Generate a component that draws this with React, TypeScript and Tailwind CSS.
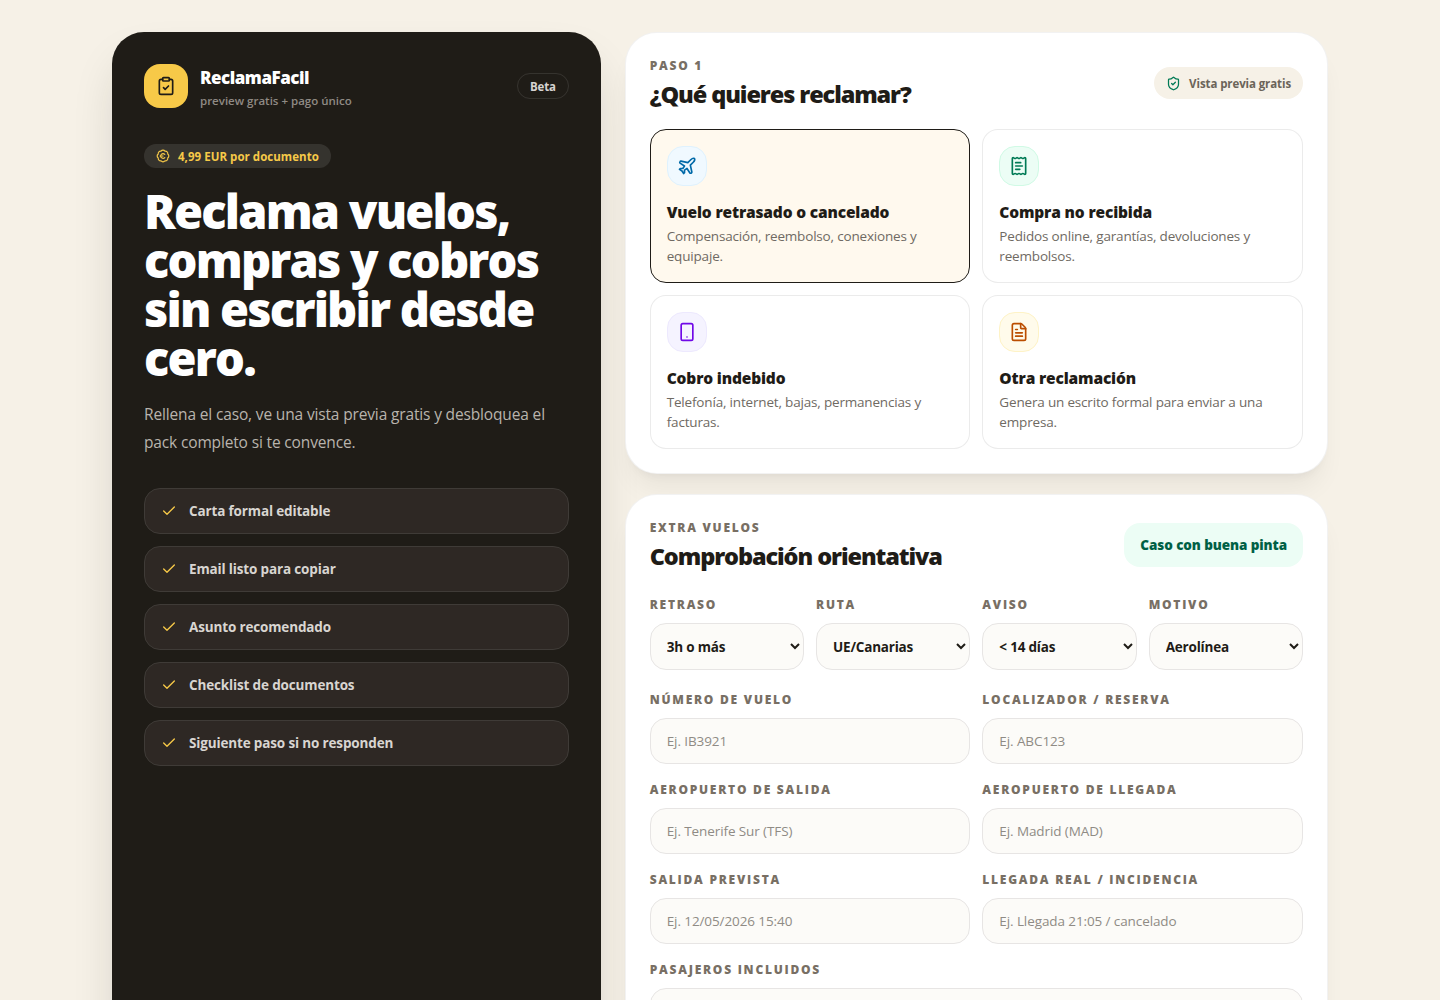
import React, { useState } from 'react';
import {
  BadgeEuro,
  Check,
  ClipboardCheck,
  FileText,
  Plane,
  ReceiptText,
  ShieldCheck,
  Smartphone,
  type LucideIcon
} from 'lucide-react';

type ClaimId = 'flight' | 'purchase' | 'charge' | 'other';

interface ClaimOption {
  id: ClaimId;
  title: string;
  description: string;
  icon: LucideIcon;
  tone: string;
}

const benefits = [
  'Carta formal editable',
  'Email listo para copiar',
  'Asunto recomendado',
  'Checklist de documentos',
  'Siguiente paso si no responden'
];

const claimOptions: ClaimOption[] = [
  {
    id: 'flight',
    title: 'Vuelo retrasado o cancelado',
    description: 'Compensación, reembolso, conexiones y equipaje.',
    icon: Plane,
    tone: 'border-sky-100 bg-sky-50 text-sky-700'
  },
  {
    id: 'purchase',
    title: 'Compra no recibida',
    description: 'Pedidos online, garantías, devoluciones y reembolsos.',
    icon: ReceiptText,
    tone: 'border-emerald-100 bg-emerald-50 text-emerald-700'
  },
  {
    id: 'charge',
    title: 'Cobro indebido',
    description: 'Telefonía, internet, bajas, permanencias y facturas.',
    icon: Smartphone,
    tone: 'border-violet-100 bg-violet-50 text-violet-700'
  },
  {
    id: 'other',
    title: 'Otra reclamación',
    description: 'Genera un escrito formal para enviar a una empresa.',
    icon: FileText,
    tone: 'border-amber-100 bg-amber-50 text-amber-700'
  }
];

const checks = [
  { label: 'Retraso', options: ['3h o más', 'Menos de 3h'] },
  { label: 'Ruta', options: ['UE/Canarias', 'Fuera UE'] },
  { label: 'Aviso', options: ['< 14 días', '14 días o más'] },
  { label: 'Motivo', options: ['Aerolínea', 'Extraordinario'] }
];

const fields = [
  { label: 'Número de vuelo', placeholder: 'Ej. IB3921' },
  { label: 'Localizador / reserva', placeholder: 'Ej. ABC123' },
  { label: 'Aeropuerto de salida', placeholder: 'Ej. Tenerife Sur (TFS)' },
  { label: 'Aeropuerto de llegada', placeholder: 'Ej. Madrid (MAD)' },
  { label: 'Salida prevista', placeholder: 'Ej. 12/05/2026 15:40' },
  { label: 'Llegada real / incidencia', placeholder: 'Ej. Llegada 21:05 / cancelado' },
  { label: 'Pasajeros incluidos', placeholder: 'Ej. 2 adultos y 1 menor', wide: true }
];

const Panel: React.FC<{ children: React.ReactNode }> = ({ children }) => (
  <section className="rounded-[2rem] border border-black/5 bg-white p-6 shadow-xl shadow-stone-900/5">
    {children}
  </section>
);

const FieldLabel: React.FC<{ children: React.ReactNode }> = ({ children }) => (
  <span className="mb-2 block text-xs leading-5 font-extrabold tracking-[1.75px] text-[#786f64] uppercase">
    {children}
  </span>
);

const PanelTitle: React.FC<{ eyebrow: string; title: string }> = ({ eyebrow, title }) => (
  <div className="-mb-px">
    <p className="text-xs leading-[18px] font-extrabold tracking-[1.75px] text-[#786f64] uppercase">{eyebrow}</p>
    <h2 className="mt-[3px] text-[23.5px] leading-8 font-extrabold tracking-[-1.1px]">{title}</h2>
  </div>
);

const Sidebar: React.FC = () => (
  <aside className="rounded-[2rem] bg-[#1f1c17] p-8 text-white shadow-2xl shadow-[#1f1c17]/20">
    <div className="flex items-center justify-between">
      <div className="flex items-center gap-3">
        <div className="flex h-11 w-11 items-center justify-center rounded-2xl bg-[#f7c948] text-[#1f1c17]">
          <ClipboardCheck size={20} />
        </div>
        <div>
          <p className="text-[17px] leading-7 font-extrabold tracking-[-0.48px]">ReclamaFacil</p>
          <p className="-mb-0.5 text-[11.5px] leading-[18px] font-semibold text-[#8f8a84]">
            preview gratis + pago único
          </p>
        </div>
      </div>
      <span className="rounded-full border border-white/10 px-3 pt-[5px] pb-[3px] text-[11.5px] leading-4 font-bold tracking-[-0.2px] text-stone-300">
        Beta
      </span>
    </div>

    <div className="mt-9 flex w-fit items-center gap-2 rounded-full bg-white/10 px-3 text-[11.5px] leading-6 font-bold tracking-[0.04px] text-[#f7c948]">
      <BadgeEuro size={14} />
      <span className="h-6 pt-px leading-6">4,99 EUR por documento</span>
    </div>
    <h1 className="mt-[19px] -mb-[3px] text-[47px] leading-[49px] font-extrabold tracking-[-1.8px]">
      Reclama vuelos, compras y cobros sin escribir desde cero.
    </h1>
    <p className="mt-5 text-[15.5px] leading-7 tracking-[-0.15px] text-[#b9b4ad]">
      Rellena el caso, ve una vista previa gratis y desbloquea el pack completo si te convence.
    </p>

    <ul className="mt-8 space-y-3">
      {benefits.map((benefit) => (
        <li
          key={benefit}
          className="flex items-center gap-3 rounded-2xl border border-[#3f3b37] bg-[#2e2824] px-4 py-3 text-[13.5px] leading-5 font-bold tracking-[-0.15px] text-[#d8d5d1]"
        >
          <Check size={16} className="text-[#f7c948]" />
          {benefit}
        </li>
      ))}
    </ul>
  </aside>
);

export default function App() {
  const [selected, setSelected] = useState<ClaimId>('flight');

  return (
    <main className="h-screen overflow-hidden bg-[#f6f1e7] font-['Open_Sans',sans-serif] text-[#1f1c17]">
      <div className="mx-auto grid max-w-7xl grid-cols-[0.82fr_1.18fr] gap-6 px-8 py-8">
        <Sidebar />

        <div className="space-y-5">
          <Panel>
            <div className="flex items-center justify-between">
              <PanelTitle eyebrow="Paso 1" title="¿Qué quieres reclamar?" />
              <span className="flex h-8 items-center gap-2 rounded-full bg-[#f6f1e7] px-3 text-[11.5px] font-bold tracking-[-0.1px] text-[#6b6459]">
                <ShieldCheck size={15} className="text-emerald-700" />
                <span className="pt-0.5 leading-4">Vista previa gratis</span>
              </span>
            </div>

            <div className="mt-5 grid grid-cols-2 gap-3">
              {claimOptions.map(({ id, title, description, icon: Icon, tone }) => (
                <button
                  key={id}
                  type="button"
                  onClick={() => setSelected(id)}
                  className={`rounded-2xl border p-4 text-left ${
                    selected === id ? 'border-[#1f1c17] bg-[#fff9ee]' : 'border-black/8 bg-white'
                  }`}
                >
                  <span className={`flex h-10 w-10 items-center justify-center rounded-2xl border ${tone}`}>
                    <Icon size={20} />
                  </span>
                  <span className="mt-4 block text-[15.5px] leading-5 font-extrabold tracking-[-0.16px]">{title}</span>
                  <span className="mt-1 block text-[13.5px] leading-5 tracking-[-0.18px] text-[#6f6a63]">
                    {description}
                  </span>
                </button>
              ))}
            </div>
          </Panel>

          <Panel>
            <div className="flex items-center justify-between">
              <PanelTitle eyebrow="Extra vuelos" title="Comprobación orientativa" />
              <span className="rounded-2xl bg-emerald-50 px-4 py-3 text-[13.5px] leading-5 font-extrabold tracking-[-0.09px] text-emerald-800">
                Caso con buena pinta
              </span>
            </div>

            <div className="mt-6 grid grid-cols-4 gap-3">
              {checks.map((check) => (
                <label key={check.label} className="block">
                  <FieldLabel>{check.label}</FieldLabel>
                  <select className="block h-[47px] w-full rounded-2xl border border-stone-200 bg-[#fcfbf8] pt-px pl-3 text-[13.5px] font-bold tracking-[-0.2px] outline-none">
                    {check.options.map((option) => (
                      <option key={option}>{option}</option>
                    ))}
                  </select>
                </label>
              ))}
            </div>

            <div className="mt-5 grid grid-cols-2 gap-x-3 gap-y-4">
              {fields.map((field) => (
                <label key={field.label} className={field.wide ? 'col-span-2 block' : 'block'}>
                  <FieldLabel>{field.label}</FieldLabel>
                  <input
                    placeholder={field.placeholder}
                    className="block h-[46px] w-full rounded-2xl border border-stone-200 bg-[#fcfbf8] px-4 text-[13.5px] tracking-[-0.1px] outline-none placeholder:text-[#8f8b85]"
                  />
                </label>
              ))}
            </div>
          </Panel>
        </div>
      </div>
    </main>
  );
}
